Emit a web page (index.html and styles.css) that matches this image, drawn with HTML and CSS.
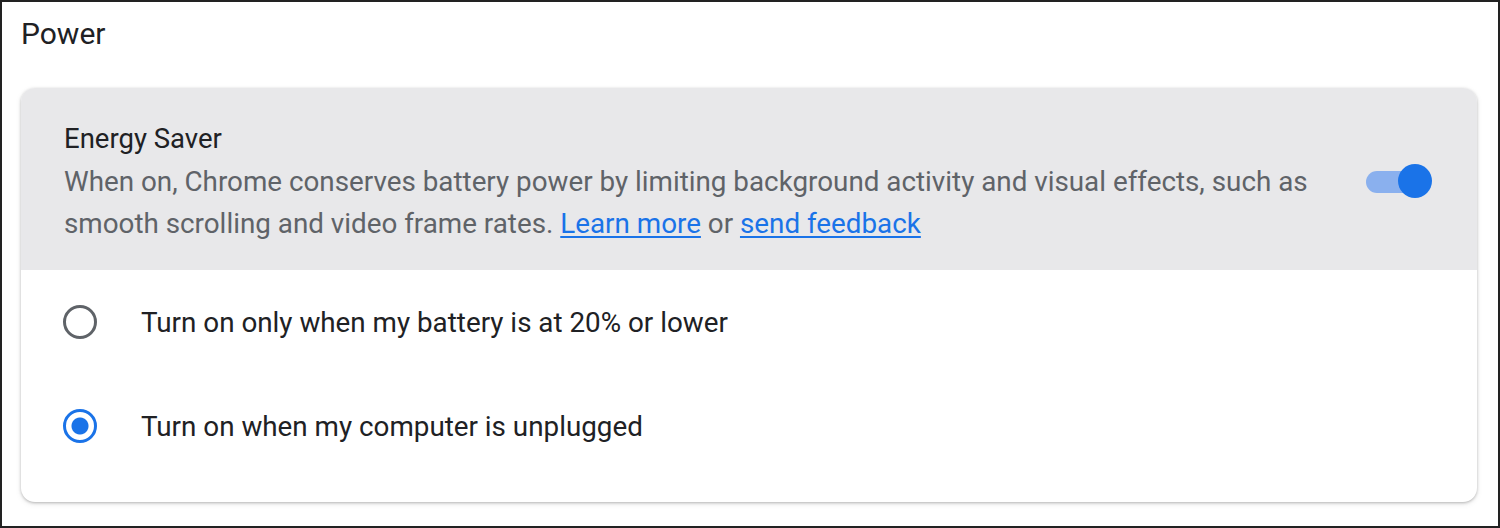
FILE: index.html
```html
<!DOCTYPE html>
<html>
<head>
<meta charset="utf-8">
<link rel="stylesheet" href="styles.css">
</head>
<body>
<div class="frame">
  <h1 class="title">Power</h1>
  <div class="card">
    <div class="header">
      <div class="header-text">
        <div class="label">Energy Saver</div>
        <div class="desc">When on, Chrome conserves battery power by limiting background activity and visual effects, such as smooth scrolling and video frame rates. <a href="#" class="link">Learn more</a> or <a href="#" class="link">send feedback</a></div>
      </div>
      <div class="toggle"><span class="track"></span><span class="knob"></span></div>
    </div>
    <div class="options">
      <div class="option">
        <span class="radio"></span>
        <span class="opt-label">Turn on only when my battery is at 20% or lower</span>
      </div>
      <div class="option">
        <span class="radio checked"></span>
        <span class="opt-label">Turn on when my computer is unplugged</span>
      </div>
    </div>
  </div>
</div>
</body>
</html>
```
FILE: styles.css
```css
html, body {
  margin: 0;
  padding: 0;
  background: #fff;
}
body {
  font-family: Roboto, "Liberation Sans", sans-serif;
  width: 1500px;
  height: 528px;
  overflow: hidden;
}
.frame {
  box-sizing: border-box;
  width: 1500px;
  height: 528px;
  border: 2px solid #222;
  padding: 0 21px 0 19px;
}
.title {
  margin: 0;
  font-weight: 400;
  font-size: 30px;
  color: #202124;
  height: 86px;
  line-height: 64px;
}
.card {
  border-radius: 14px;
  background: #fff;
  box-shadow: 0 1px 3px rgba(0,0,0,0.25), 0 2px 6px rgba(0,0,0,0.08);
  overflow: hidden;
  height: 414px;
}
.header {
  background: #e8e8ea;
  height: 182px;
  display: flex;
  align-items: flex-start;
  padding: 0 41px 0 43px;
  box-sizing: border-box;
}
.header-text {
  flex: 1;
  padding-top: 29px;
}
.label {
  font-size: 27.5px;
  color: #202124;
  line-height: 44px;
}
.desc {
  font-size: 27.8px;
  color: #5f6368;
  line-height: 42px;
  max-width: 1262px;
}
.link {
  color: #1a73e8;
  text-decoration: underline;
  text-underline-offset: 3px;
}
.toggle {
  position: relative;
  width: 70px;
  height: 36px;
  margin-top: 75px;
  margin-left: 40px;
}
.track {
  position: absolute;
  left: 0;
  top: 8px;
  width: 58px;
  height: 22px;
  border-radius: 11px;
  background: #8ab0ee;
}
.knob {
  position: absolute;
  left: 32px;
  top: 1px;
  width: 34px;
  height: 34px;
  border-radius: 50%;
  background: #1a73e8;
}
.options {
  display: flex;
  flex-direction: column;
}
.option {
  display: flex;
  align-items: center;
  height: 104px;
  padding-left: 42px;
}
.radio {
  box-sizing: border-box;
  width: 34px;
  height: 34px;
  border-radius: 50%;
  border: 3px solid #5f6368;
  margin-right: 44px;
  flex: none;
}
.radio.checked {
  border-color: #1a73e8;
  background: radial-gradient(circle, #1a73e8 0 8px, transparent 9px);
}
.opt-label {
  font-size: 27.8px;
  color: #202124;
}
```
